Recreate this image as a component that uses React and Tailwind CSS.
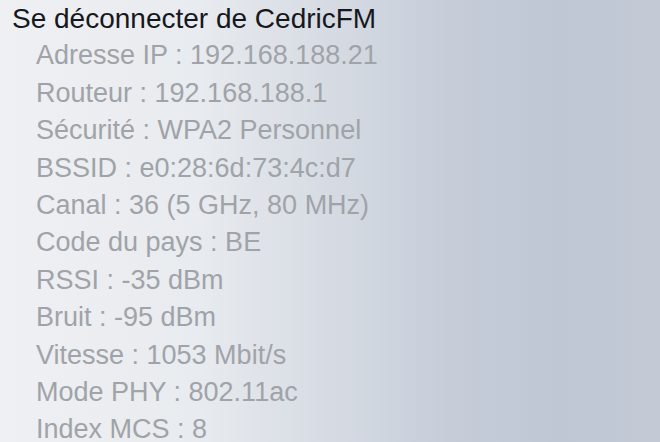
export default function App() {
  const rows = [
    "Adresse IP : 192.168.188.21",
    "Routeur : 192.168.188.1",
    "Sécurité : WPA2 Personnel",
    "BSSID : e0:28:6d:73:4c:d7",
    "Canal : 36 (5 GHz, 80 MHz)",
    "Code du pays : BE",
    "RSSI : -35 dBm",
    "Bruit : -95 dBm",
    "Vitesse : 1053 Mbit/s",
    "Mode PHY : 802.11ac",
    "Index MCS : 8",
  ];
  return (
    <div
      className="w-[660px] h-[442px] overflow-hidden bg-[linear-gradient(90deg,#eff0f3_0%,#e8ebef_30%,#d6dbe3_50%,#c6cdd9_68%,#bfc7d4_85%,#c3cad6_100%)]"
      style={{ fontFamily: '"Liberation Sans", Arial, sans-serif' }}
    >
      <div className="flex flex-col leading-[37.4px]">
        <div className="pl-[12px] text-[28px] text-[#16181c]">Se déconnecter de CedricFM</div>
        {rows.map((r) => (
          <div key={r} className="pl-[36px] text-[27px] text-[#a0a3a8]">
            {r}
          </div>
        ))}
      </div>
    </div>
  );
}
